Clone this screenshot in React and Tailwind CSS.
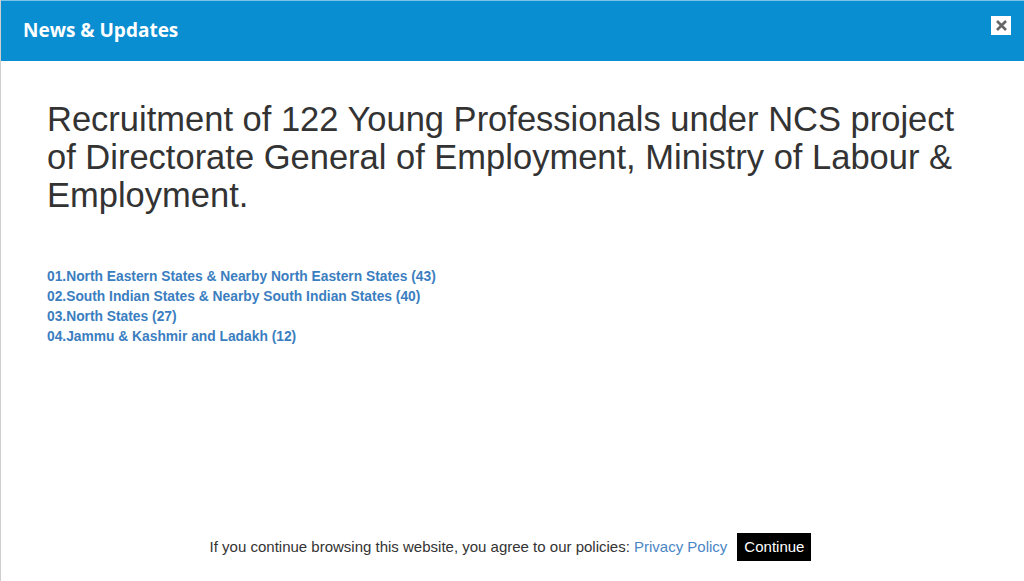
export default function App() {
  return (
    <div className="w-[1024px] h-[581px] bg-white border-l border-[#cfcfcf] flex flex-col overflow-hidden" style={{ fontFamily: '"Liberation Sans", Arial, sans-serif' }}>
      <div className="h-[61px] bg-[#0a8ed2] border-t border-[#7cc3ea] flex items-center justify-between pl-[22px] pr-[13px] shrink-0">
        <div className="text-white text-[19px] font-bold -mt-[1px]" style={{ fontFamily: '"Open Sans", sans-serif' }}>News &amp; Updates</div>
        <button className="w-[20px] h-[19px] bg-white flex items-center justify-center -mt-[12px]">
          <svg width="13" height="13" viewBox="0 0 13 13">
            <path d="M2 2 L11 11 M11 2 L2 11" stroke="#666" strokeWidth="2.6" />
          </svg>
        </button>
      </div>
      <div className="flex-1 flex flex-col px-[46px] pt-[39px]">
        <h1 className="text-[34.5px] leading-[38px] text-[#333] font-normal w-[925px]">
          Recruitment of 122 Young Professionals under NCS project of Directorate General of Employment, Ministry of Labour &amp; Employment.
        </h1>
        <div className="mt-[53px] flex flex-col text-[13.8px] leading-[20px] font-bold text-[#3a7ebf]">
          <a>01.North Eastern States &amp; Nearby North Eastern States (43)</a>
          <a>02.South Indian States &amp; Nearby South Indian States (40)</a>
          <a>03.North States (27)</a>
          <a>04.Jammu &amp; Kashmir and Ladakh (12)</a>
        </div>
        <div className="mt-auto mb-[20px] flex items-center justify-center gap-[10px] text-[15px] text-[#333] pr-[4px]">
          <span>If you continue browsing this website, you agree to our policies: <a className="text-[#4a86c5]">Privacy Policy</a></span>
          <button className="bg-black text-white h-[28px] px-[7px] text-[15px]">Continue</button>
        </div>
      </div>
    </div>
  );
}
